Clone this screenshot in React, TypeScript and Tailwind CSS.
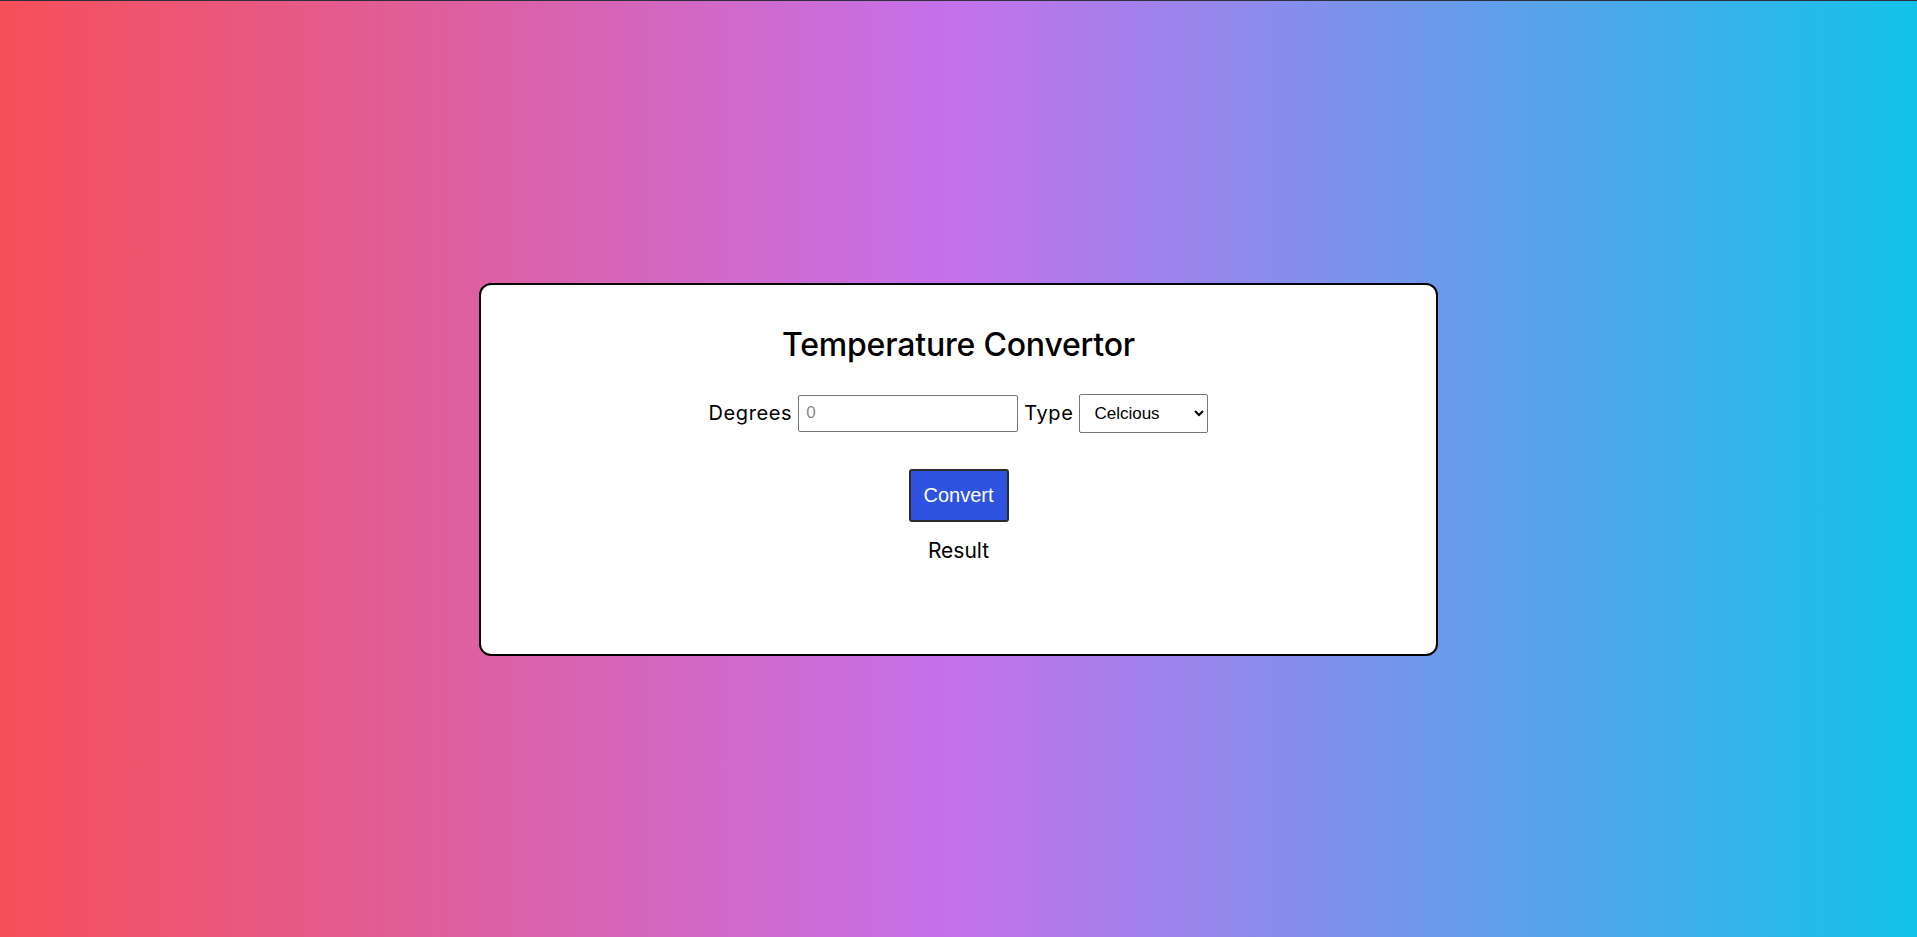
import { useState } from 'react';

export default function App() {
    const [degrees, setDegrees] = useState('');
    const [type, setType] = useState('celcious');
    const [result, setResult] = useState<string | null>(null);

    const convert = () => {
        const d = parseFloat(degrees);
        if (isNaN(d)) {
            setResult(null);
            return;
        }
        if (type === 'celcious') setResult(`${((d * 9) / 5 + 32).toFixed(2)} °F`);
        else setResult(`${(((d - 32) * 5) / 9).toFixed(2)} °C`);
    };

    return (
        <div className="min-h-screen w-full flex items-center justify-center border-t border-[#2d303a] bg-[linear-gradient(to_right,#f64f59,#c471ed,#12c2e9)] font-['Inter',sans-serif]">
            <div className="w-1/2 bg-white border-2 border-black rounded-[12px] flex flex-col items-center pt-[36px] pb-[88px]">
                <h1 className="text-[32px] leading-[48px] font-medium text-black tracking-[-0.2px]">Temperature Convertor</h1>

                <div className="mt-[25px] flex items-center gap-[6px] text-[20px] tracking-[0.6px] text-black">
                    <label htmlFor="degrees">Degrees</label>
                    <input
                        id="degrees"
                        type="number"
                        placeholder="0"
                        value={degrees}
                        onChange={(e) => setDegrees(e.target.value)}
                        className="w-[220px] h-[37px] border border-[#767676] rounded-[2px] pl-[7px] text-[17px] tracking-normal font-['Liberation_Sans',sans-serif] placeholder:text-[#8a8a8a] bg-white"
                    />
                    <label htmlFor="type">Type</label>
                    <select
                        id="type"
                        value={type}
                        onChange={(e) => setType(e.target.value)}
                        className="w-[129px] h-[39px] border border-[#767676] rounded-[2px] pl-[10px] pr-[8px] text-[17px] tracking-normal font-['Liberation_Sans',sans-serif] bg-white text-black"
                    >
                        <option value="celcious">Celcious</option>
                        <option value="fahrenheit">Fahrenheit</option>
                    </select>
                </div>

                <button
                    onClick={convert}
                    className="mt-[36px] w-[100px] h-[53px] bg-[#2e53e0] text-white text-[20px] font-['Liberation_Sans',sans-serif] border-2 border-[#2b2b2b] rounded-[3px] cursor-pointer"
                >
                    Convert
                </button>

                <p className="mt-[14px] text-[21px] leading-[30px] text-black">{result ?? 'Result'}</p>
            </div>
        </div>
    );
}
